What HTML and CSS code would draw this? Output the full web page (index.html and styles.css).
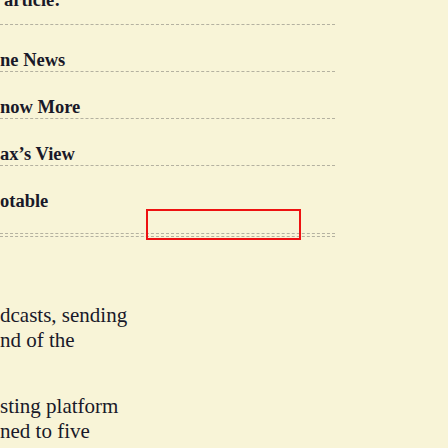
FILE: index.html
```html
<!DOCTYPE html>
<html>
<head>
<meta charset="utf-8">
<link rel="stylesheet" href="styles.css">
</head>
<body>
<div class="page">
  <ul class="links">
    <li class="item first">article:</li>
    <li class="item">ne News</li>
    <li class="item">now More</li>
    <li class="item">ax’s View</li>
    <li class="item last">otable</li>
  </ul>
  <div class="body">
    <p>dcasts, sending<br>nd of the</p>
    <p>sting platform<br>ned to five</p>
  </div>
  <div class="marker"></div>
</div>
</body>
</html>
```
FILE: styles.css
```css
html, body {
  margin: 0;
  padding: 0;
  background: #f8f4d7;
}
.page {
  position: relative;
  width: 448px;
  height: 448px;
  overflow: hidden;
  font-family: "Liberation Serif", "Times New Roman", serif;
  color: #191929;
}
.links {
  list-style: none;
  margin: 0;
  padding: 0;
  width: 335px;
}
.item {
  box-sizing: border-box;
  height: 47px;
  border-bottom: 1px dashed #b4b1a0;
  font-weight: bold;
  font-size: 18.5px;
  line-height: 20px;
  padding-top: 25px;
}
.item.first {
  margin-top: -10px;
  height: 35px;
  padding-top: 0;
  padding-left: 4px;
}
.item.last {
  display: flex;
  flex-direction: column;
  height: 71px;
}
.item.last::after {
  content: "";
  margin-top: auto;
  margin-bottom: 2px;
  border-bottom: 1px dashed #b4b1a0;
}
.body {
  padding-top: 66px;
  font-size: 21px;
  line-height: 25px;
}
.body p {
  margin: 0 0 41px 0;
}
.marker {
  position: absolute;
  left: 146px;
  top: 209px;
  width: 151px;
  height: 27px;
  border: 2px solid #ee1111;
}
```
